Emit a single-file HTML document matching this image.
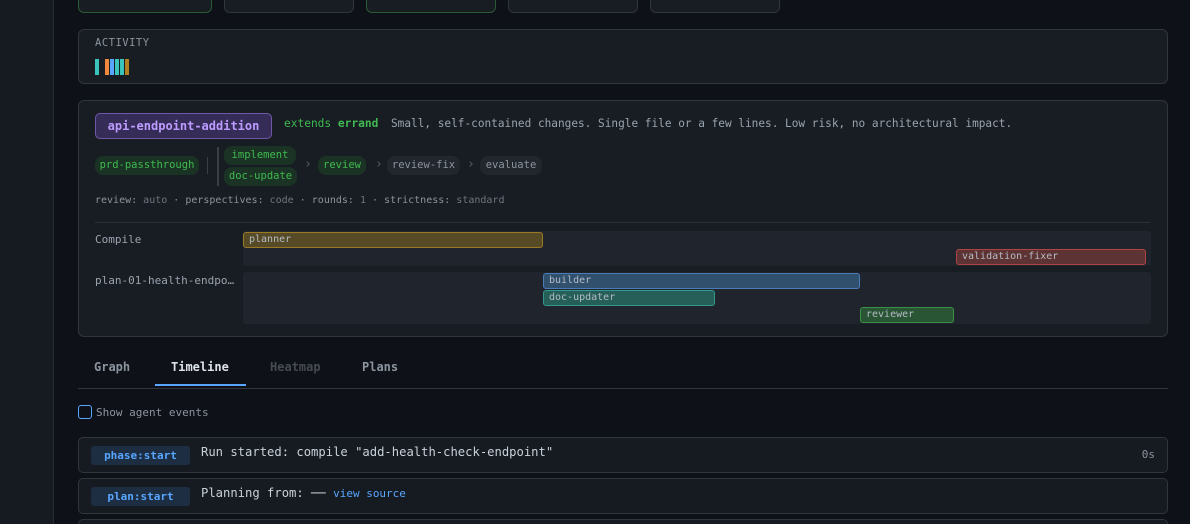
<!DOCTYPE html>
<html><head><meta charset="utf-8"><style>
*{box-sizing:border-box;margin:0;padding:0}
html{width:1190px;height:524px;overflow:hidden}
body{width:1190px;height:524px;overflow:hidden;background:#0e1117;font-family:"DejaVu Sans Mono","Liberation Mono",monospace;font-size:11px;color:#8b949e;position:relative;white-space:nowrap}
.a{position:absolute}
.side{left:0;top:0;width:54px;height:524px;background:#161a21;border-right:1px solid #262b33}
.card{background:#181c23;border:1px solid #30363d;border-radius:6px}
.pill{position:absolute;height:19px;line-height:19px;border-radius:8px;font-size:10.5px;text-align:center;white-space:nowrap}
.g{background:#1b3324;color:#3fb950}
.n{background:#22262d;color:#8b949e}
.bar{position:absolute;height:16px;border-radius:3px;font-size:10px;line-height:14px;padding-left:5px;color:#b5bcc5;border:1px solid}
.tab{position:absolute;top:360px;font-size:12px;font-weight:bold;color:#8b949e}
.ev{position:absolute;left:78px;width:1090px;height:36px;background:#161a21;border:1px solid #30363d;border-radius:5px}
.eb{position:absolute;left:12px;top:8px;width:99px;height:19px;background:#1d2d42;color:#58a6ff;font-weight:bold;border-radius:3px;text-align:center;line-height:19px;font-size:11px}
.et{position:absolute;left:122px;top:7px;font-size:12.2px;color:#c9d1d9}
</style></head><body>
<div class="a side"></div>
<div class="a card" style="left:78px;top:-10px;width:134px;height:23px;border-color:#2a5a36"></div>
<div class="a card" style="left:224px;top:-10px;width:130px;height:23px"></div>
<div class="a card" style="left:366px;top:-10px;width:130px;height:23px;border-color:#2a5a36"></div>
<div class="a card" style="left:508px;top:-10px;width:130px;height:23px"></div>
<div class="a card" style="left:650px;top:-10px;width:130px;height:23px"></div>

<div class="a card" style="left:78px;top:29px;width:1090px;height:55px"></div>
<div class="a" style="left:95px;top:37px;font-size:10.5px;color:#8b949e;letter-spacing:.5px">ACTIVITY</div>
<div class="a" style="left:95px;top:59px;width:4px;height:16px;background:#39c5bb"></div>
<div class="a" style="left:105px;top:59px;width:4px;height:16px;background:#f0883e"></div>
<div class="a" style="left:110px;top:59px;width:4px;height:16px;background:#58a6ff"></div>
<div class="a" style="left:115px;top:59px;width:4px;height:16px;background:#39c5bb"></div>
<div class="a" style="left:120px;top:59px;width:4px;height:16px;background:#39c5bb"></div>
<div class="a" style="left:125px;top:59px;width:4px;height:16px;background:#b08020"></div>

<div class="a card" style="left:78px;top:100px;width:1090px;height:237px"></div>
<div class="a" style="left:95px;top:113px;width:177px;height:26px;background:#362c58;border:1px solid #6f58a8;border-radius:5px;color:#bc9cff;font-weight:bold;font-size:12px;line-height:24px;text-align:center">api-endpoint-addition</div>
<div class="a" style="left:284px;top:117px;color:#3fb950;font-size:11.2px">extends <b>errand</b></div>
<div class="a" style="left:391px;top:117px;color:#9aa4ae;font-size:11.1px">Small, self-contained changes. Single file or a few lines. Low risk, no architectural impact.</div>
<div class="pill g" style="left:95px;top:156px;width:104px">prd-passthrough</div>
<div class="a" style="left:207px;top:157px;width:1px;height:17px;background:#3a3f47"></div>
<div class="a" style="left:217px;top:147px;width:2px;height:39px;background:#3a3f47"></div>
<div class="pill g" style="left:224px;top:146px;width:72px">implement</div>
<div class="pill g" style="left:224px;top:167px;width:73px">doc-update</div>
<div class="a" style="left:304px;top:157px;color:#555c66;font-size:13px">›</div>
<div class="pill g" style="left:318px;top:156px;width:48px">review</div>
<div class="a" style="left:375px;top:157px;color:#555c66;font-size:13px">›</div>
<div class="pill n" style="left:387px;top:156px;width:73px">review-fix</div>
<div class="a" style="left:467px;top:157px;color:#555c66;font-size:13px">›</div>
<div class="pill n" style="left:480px;top:156px;width:62px">evaluate</div>
<div class="a" style="left:95px;top:195px;font-size:10px;color:#8b949e">review: <span style="color:#6e7681">auto</span> · perspectives: <span style="color:#6e7681">code</span> · rounds: <span style="color:#6e7681">1</span> · strictness: <span style="color:#6e7681">standard</span></div>
<div class="a" style="left:95px;top:222px;width:1055px;height:1px;background:#2a2f37"></div>
<div class="a" style="left:95px;top:233px;color:#9aa4ae">Compile</div>
<div class="a" style="left:243px;top:231px;width:908px;height:35px;background:#20242c;border-radius:3px"></div>
<div class="bar" style="left:243px;top:232px;width:300px;background:#564a27;border-color:#9a7a25">planner</div>
<div class="bar" style="left:956px;top:249px;width:190px;background:#5e3333;border-color:#b04444">validation-fixer</div>
<div class="a" style="left:95px;top:274px;color:#9aa4ae">plan-01-health-endpo…</div>
<div class="a" style="left:243px;top:272px;width:908px;height:52px;background:#20242c;border-radius:3px"></div>
<div class="bar" style="left:543px;top:273px;width:317px;background:#30506e;border-color:#4a7cb8">builder</div>
<div class="bar" style="left:543px;top:290px;width:172px;background:#265e58;border-color:#35988c">doc-updater</div>
<div class="bar" style="left:860px;top:307px;width:94px;background:#2a5535;border-color:#3a9048">reviewer</div>

<div class="tab" style="left:94px">Graph</div>
<div class="tab" style="left:171px;color:#dce3ea">Timeline</div>
<div class="tab" style="left:270px;color:#454b53">Heatmap</div>
<div class="tab" style="left:362px">Plans</div>
<div class="a" style="left:78px;top:388px;width:1090px;height:1px;background:#30363d"></div>
<div class="a" style="left:155px;top:384px;width:91px;height:2px;background:#58a6ff"></div>
<div class="a" style="left:78px;top:405px;width:14px;height:14px;border:1px solid #58a6ff;border-radius:3px"></div>
<div class="a" style="left:96px;top:406px;color:#8b949e">Show agent events</div>

<div class="ev" style="top:437px"><div class="eb">phase:start</div><div class="et">Run started: compile "add-health-check-endpoint"</div><div class="a" style="right:12px;top:10px;color:#8b949e">0s</div></div>
<div class="ev" style="top:478px"><div class="eb">plan:start</div><div class="et">Planning from: ── <span style="color:#58a6ff;font-size:11px">view source</span></div></div>
<div class="ev" style="top:519px;height:5px;border-bottom:none;border-radius:5px 5px 0 0"></div>
</body></html>
